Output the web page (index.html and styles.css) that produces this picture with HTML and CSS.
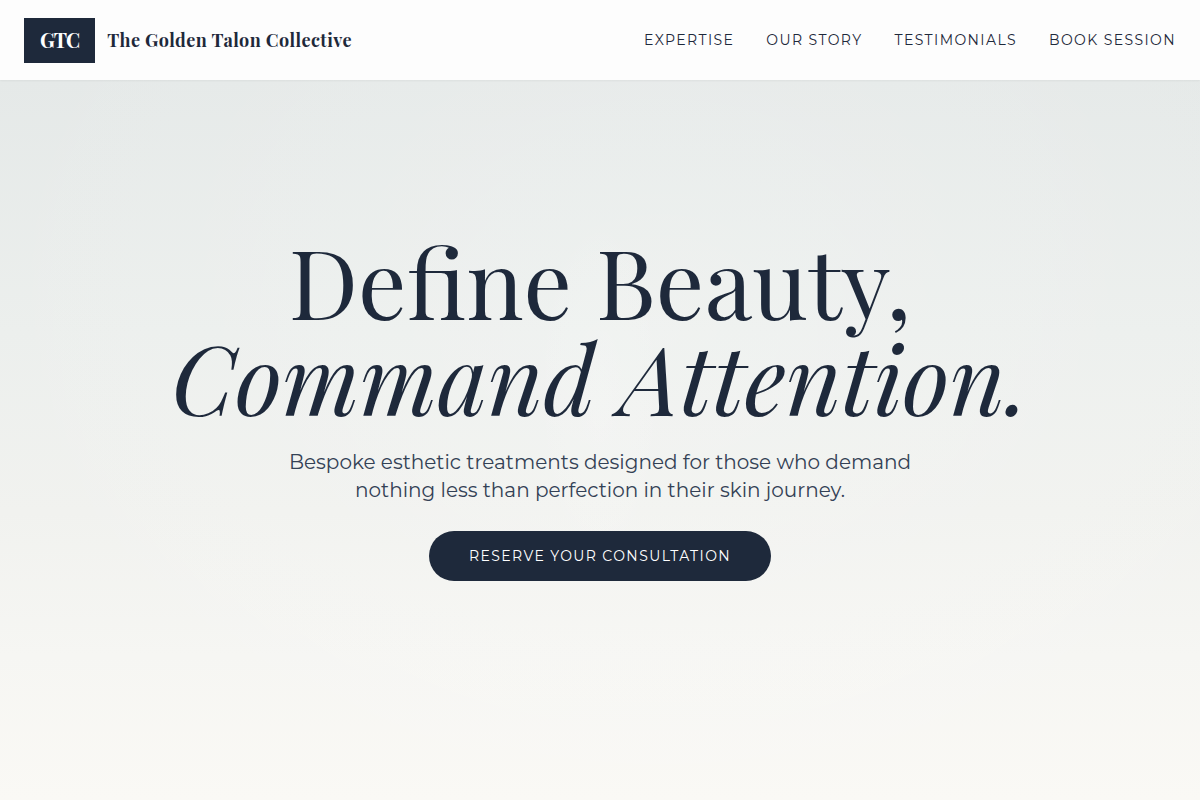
FILE: index.html
```html
<!DOCTYPE html>
<html lang="en">
<head>
<meta charset="utf-8">
<meta name="viewport" content="width=device-width, initial-scale=1">
<title>The Golden Talon Collective</title>
<link rel="stylesheet" href="styles.css">
</head>
<body class="page">
<header class="header">
  <a class="brand" href="#home">
    <span class="brand-mark">GTC</span>
    <span class="brand-name">The Golden Talon Collective</span>
  </a>
  <nav class="nav" aria-label="Main">
    <a class="nav-link" href="#expertise">EXPERTISE</a>
    <a class="nav-link" href="#story">OUR STORY</a>
    <a class="nav-link" href="#testimonials">TESTIMONIALS</a>
    <a class="nav-link" href="#book">BOOK SESSION</a>
  </nav>
</header>
<main class="hero" id="home">
  <h1 class="hero-title">Define Beauty,<br><em>Command Attention.</em></h1>
  <p class="hero-text">Bespoke esthetic treatments designed for those who demand nothing less than perfection in their skin journey.</p>
  <a class="cta" href="#book">RESERVE YOUR CONSULTATION</a>
</main>
</body>
</html>
```
FILE: styles.css
```css
* { box-sizing: border-box; }

.page {
  margin: 0;
  min-height: 100vh;
  display: flex;
  flex-direction: column;
  color: #1e293b;
  background: #faf9f5;
  font-family: Montserrat, Inter, sans-serif;
}

.header {
  display: flex;
  align-items: center;
  justify-content: space-between;
  flex-wrap: wrap;
  gap: 16px;
  min-height: 80px;
  padding: 16px 24px;
  background: #fdfdfd;
  box-shadow: 0 1px 2px rgba(0, 0, 0, 0.05);
  z-index: 1;
}

.brand {
  display: flex;
  align-items: center;
  gap: 12px;
  color: inherit;
  text-decoration: none;
  font-family: "Playfair Display", "Liberation Serif", serif;
  font-weight: 700;
}

.brand-mark {
  padding: 8px 16px 9px;
  background: #1e293b;
  color: #fff;
  font-size: 20px;
  line-height: 28px;
  letter-spacing: -0.05em;
}

.brand-name {
  font-size: 18px;
  line-height: 28px;
  letter-spacing: 0.025em;
}

.nav {
  display: flex;
  flex-wrap: wrap;
  gap: 32px;
}

.nav-link {
  color: inherit;
  text-decoration: none;
  font-size: 14px;
  line-height: 20px;
  letter-spacing: 0.1em;
}

.hero {
  flex: 1;
  display: flex;
  flex-direction: column;
  align-items: center;
  justify-content: center;
  padding: 24px 24px 92px;
  text-align: center;
  background:
    radial-gradient(ellipse 6% 28% at 50% 44%, rgba(255, 255, 255, 0.15), rgba(255, 255, 255, 0)),
    radial-gradient(ellipse 60% 80% at 55% 35%, rgba(255, 255, 255, 0.2), rgba(255, 255, 255, 0)),
    linear-gradient(#e5e9e8, #ecefed 35%, #f1f2ef 60%, #f6f6f3 80%, #faf9f5);
}

.hero-title {
  margin: 0 0 24px;
  font-family: "Playfair Display", "Liberation Serif", serif;
  font-size: 96px;
  font-weight: 400;
  line-height: 96px;
}

.hero-text {
  max-width: 672px;
  margin: 0 0 27px;
  color: #334155;
  font-size: 20px;
  line-height: 28px;
}

.cta {
  padding: 15px 40px;
  border-radius: 25px;
  background: #1e293b;
  color: #fff;
  font-size: 14px;
  line-height: 20px;
  letter-spacing: 0.1em;
  text-decoration: none;
}
```
